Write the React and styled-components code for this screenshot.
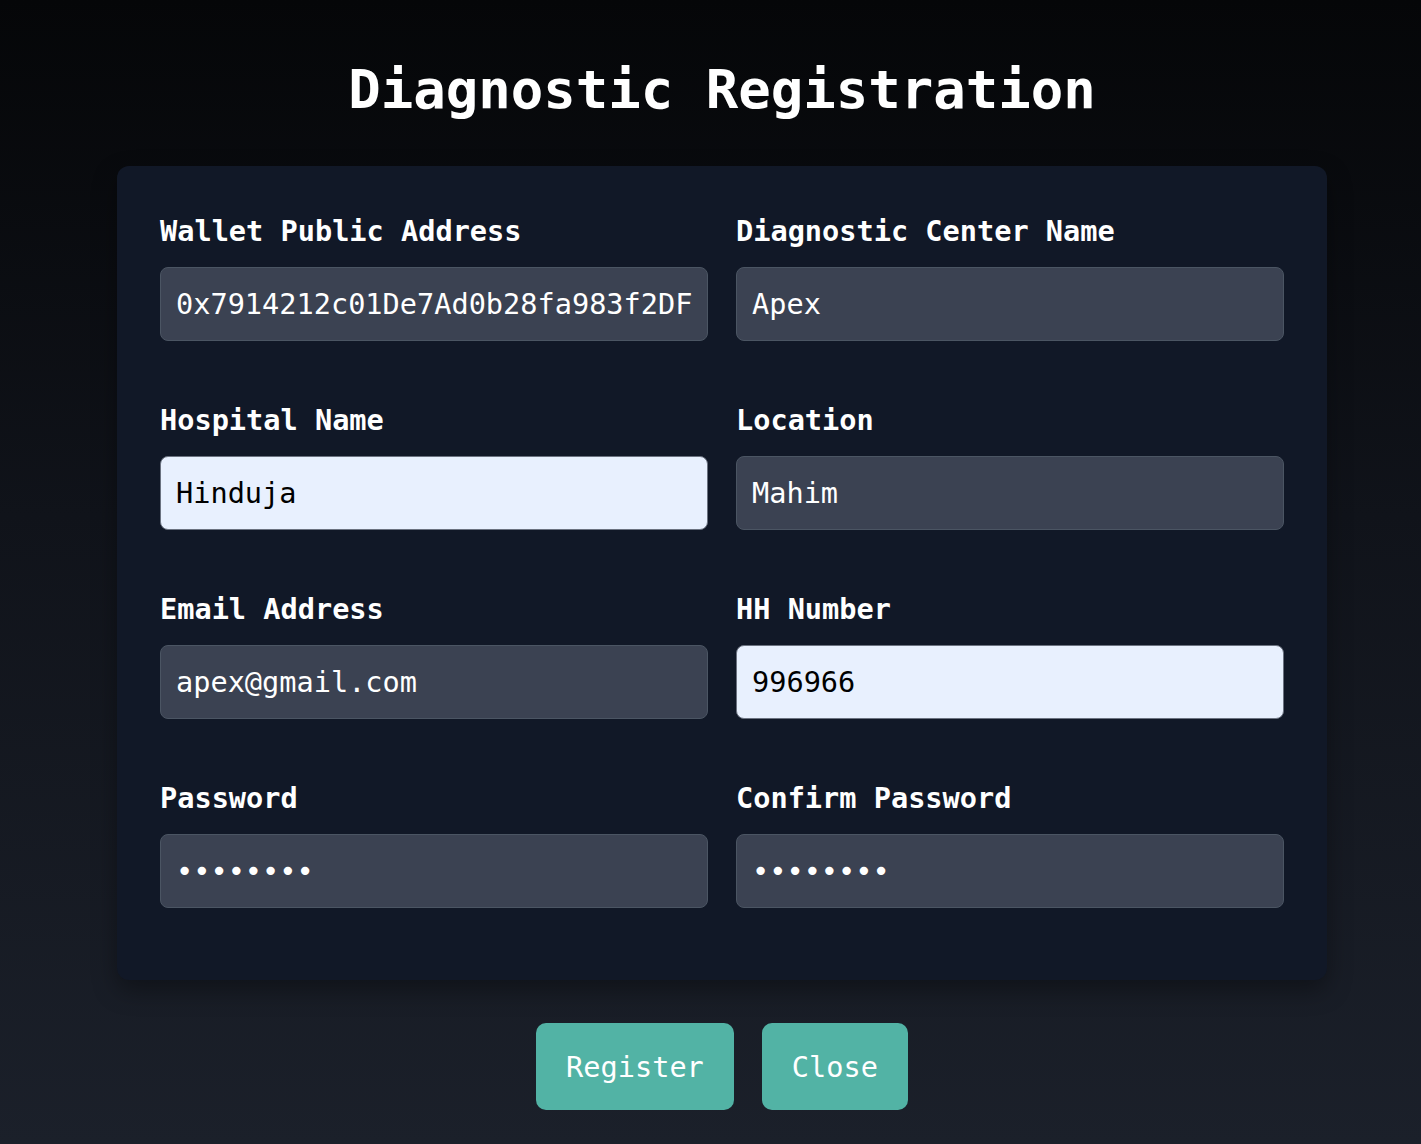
import styled, { createGlobalStyle } from "styled-components";

const GlobalStyle = createGlobalStyle`
   html, body {
      margin: 0;
      padding: 0;
   }
   body {
      font-family: "DejaVu Sans Mono", "Liberation Mono", monospace;
      background: #0d0f14;
   }
`;

const fields = [
   { label: "Wallet Public Address", value: "0x7914212c01De7Ad0b28fa983f2DF" },
   { label: "Diagnostic Center Name", value: "Apex" },
   { label: "Hospital Name", value: "Hinduja", filled: true },
   { label: "Location", value: "Mahim" },
   { label: "Email Address", value: "apex@gmail.com" },
   { label: "HH Number", value: "996966", filled: true },
   { label: "Password", value: "password", type: "password" },
   { label: "Confirm Password", value: "password", type: "password" },
];

const App = () => {
   return (
      <Page>
         <GlobalStyle />
         <Title>Diagnostic Registration</Title>
         <Card>
            <Grid>
               {fields.map((f) => (
                  <Field key={f.label}>
                     <Label>{f.label}</Label>
                     <Input
                        type={f.type || "text"}
                        defaultValue={f.value}
                        $filled={f.filled}
                        readOnly
                     />
                  </Field>
               ))}
            </Grid>
         </Card>
         <Buttons>
            <Button>Register</Button>
            <Button>Close</Button>
         </Buttons>
      </Page>
   );
};

const Page = styled.div`
   min-height: 1144px;
   box-sizing: border-box;
   padding: 58px 94px 34px 117px;
   background: linear-gradient(180deg, #050608 0%, #10131a 45%, #1b202a 100%);
   display: flex;
   flex-direction: column;
   align-items: stretch;
`;

const Title = styled.h1`
   margin: 0;
   color: #ffffff;
   font-size: 54px;
   font-weight: bold;
   line-height: 63px;
   text-align: center;
`;

const Card = styled.div`
   margin-top: 45px;
   background: #111827;
   border-radius: 12px;
   padding: 46px 43px 72px;
   box-shadow: 0 10px 25px rgba(0, 0, 0, 0.35);
`;

const Grid = styled.div`
   display: grid;
   grid-template-columns: 1fr 1fr;
   column-gap: 28px;
   row-gap: 60px;
`;

const Field = styled.div`
   display: flex;
   flex-direction: column;
   min-width: 0;
`;

const Label = styled.label`
   color: #ffffff;
   font-size: 28.6px;
   font-weight: bold;
   line-height: 34px;
   padding-top: 2px;
   margin-bottom: 19px;
`;

const Input = styled.input`
   box-sizing: border-box;
   width: 100%;
   height: 74px;
   padding: 0 15px;
   font-family: "DejaVu Sans Mono", "Liberation Mono", monospace;
   font-size: 28.6px;
   border-radius: 8px;
   border: 1px solid ${(p) => (p.$filled ? "#6b7280" : "#4b5563")};
   background: ${(p) => (p.$filled ? "#e8f0fe" : "#3b4252")};
   color: ${(p) => (p.$filled ? "#000000" : "#ffffff")};
   outline: none;
`;

const Buttons = styled.div`
   display: flex;
   justify-content: center;
   gap: 28px;
   margin-top: 43px;
`;

const Button = styled.button`
   background: #52b3a5;
   color: #ffffff;
   border: none;
   border-radius: 10px;
   height: 87px;
   padding: 0 30px;
   font-family: "DejaVu Sans Mono", "Liberation Mono", monospace;
   font-size: 28.6px;
   cursor: pointer;
`;

export default App;
